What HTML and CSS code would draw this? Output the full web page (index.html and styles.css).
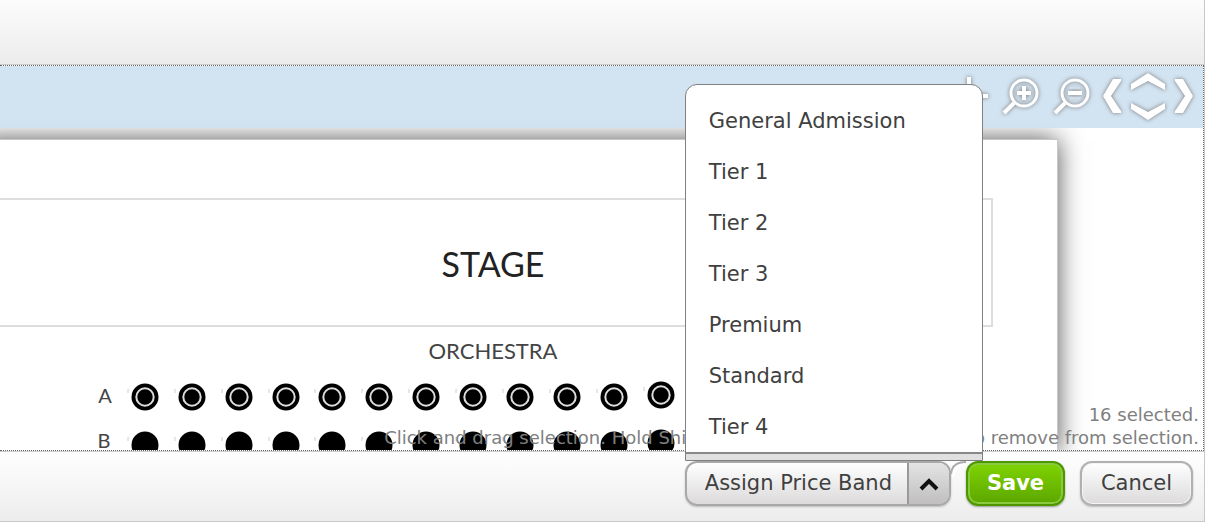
FILE: index.html
```html
<!DOCTYPE html>
<html lang="en">
<head>
<meta charset="utf-8">
<title>Assign Price Band</title>
<link rel="stylesheet" href="styles.css">
</head>
<body>
<main class="panel">
  <header class="panel-header"></header>
  <section class="canvas" aria-label="Seating map">
    <div class="sheet">
      <svg class="plan" width="1058" height="312" viewBox="0 0 1058 312">
        <defs>
          <g id="seat-on">
            <path d="M-17-8v4" stroke="#ccc"/>
            <circle r="13.5"/>
            <circle r="8.7" fill="none" stroke="#ddd" stroke-width="2"/>
          </g>
          <g id="seat">
            <path d="M-17-8v4" stroke="#ccc"/>
            <circle r="13.5"/>
          </g>
        </defs>
        <rect class="stage-box" x="-1" y="59" width="993" height="127"/>
        <text class="stage-label" x="493" y="137">STAGE</text>
        <text class="area-label" x="493" y="219">ORCHESTRA</text>
        <text class="row-label" x="105" y="263">A</text>
        <text class="row-label" x="104" y="308">B</text>
        <g>
          <use href="#seat-on" x="145" y="257"/><use href="#seat-on" x="192" y="257"/><use href="#seat-on" x="239" y="257"/><use href="#seat-on" x="286" y="257"/><use href="#seat-on" x="332" y="257"/><use href="#seat-on" x="379" y="257"/><use href="#seat-on" x="426" y="257"/><use href="#seat-on" x="473" y="257"/><use href="#seat-on" x="520" y="257"/><use href="#seat-on" x="567" y="257"/><use href="#seat-on" x="614" y="257"/><use href="#seat-on" x="661" y="255"/>
        </g>
        <g>
          <use href="#seat" x="145" y="305"/><use href="#seat" x="192" y="305"/><use href="#seat" x="239" y="305"/><use href="#seat" x="286" y="305"/><use href="#seat" x="332" y="305"/><use href="#seat" x="379" y="305"/><use href="#seat" x="426" y="305"/><use href="#seat" x="473" y="305"/><use href="#seat" x="520" y="305"/><use href="#seat" x="567" y="305"/><use href="#seat" x="614" y="305"/><use href="#seat" x="661" y="303"/>
        </g>
      </svg>
    </div>
    <div class="tools">
      <button class="tool" aria-label="Pan">
        <svg width="44" height="52" viewBox="0 0 44 52"><path d="M24 7v38M5 26h38"/></svg>
      </button>
      <button class="tool" aria-label="Zoom in">
        <svg width="44" height="52" viewBox="0 0 44 52"><circle cx="27" cy="23" r="13" stroke-width="3"/><path d="M17 33L7 43"/><path d="M27 16v14M20 23h14"/></svg>
      </button>
      <button class="tool" aria-label="Zoom out">
        <svg width="44" height="52" viewBox="0 0 44 52"><circle cx="26" cy="23" r="13" stroke-width="3"/><path d="M16 33L6 43"/><path d="M19 23h14"/><path d="M21 18h10M21 28h10" stroke-width="1" opacity=".5"/></svg>
      </button>
      <div class="arrows">
        <button class="tool" aria-label="Move left"><svg width="22" height="52" viewBox="0 0 22 52"><path class="chev" d="M20 9H12L2 26L12 43H20V41L10 26L20 11Z"/></svg></button>
        <div class="updown">
          <button class="tool" aria-label="Move up"><svg width="42" height="25" viewBox="0 0 42 25"><path class="chev" d="M4 14L21 3L38 14V20L21 11L4 20Z"/></svg></button>
          <button class="tool" aria-label="Move down"><svg width="42" height="27" viewBox="0 0 42 27"><path class="chev" d="M4 8L21 17L38 8V14L21 25L4 14Z"/></svg></button>
        </div>
        <button class="tool" aria-label="Move right"><svg width="22" height="52" viewBox="0 0 22 52"><path class="chev" d="M2 9H10L20 26L10 43H2V41L12 26L2 11Z"/></svg></button>
      </div>
    </div>
    <p class="hint">16 selected.<br>Click and drag selection. Hold Shift to add to selection, hold Ctrl to remove from selection.</p>
  </section>
  <footer class="panel-footer">
    <div class="split">
      <button class="split-main">Assign Price Band</button><button class="split-toggle" aria-label="Show price bands" aria-expanded="true"><svg width="20" height="14" viewBox="0 0 20 14"><path d="M2 12L10 4L18 12" fill="none" stroke="#111" stroke-width="4"/></svg></button>
      <div class="menu">
        <ul class="menu-list">
          <li><button class="menu-item">General Admission</button></li>
          <li><button class="menu-item">Tier 1</button></li>
          <li><button class="menu-item">Tier 2</button></li>
          <li><button class="menu-item">Tier 3</button></li>
          <li><button class="menu-item">Premium</button></li>
          <li><button class="menu-item">Standard</button></li>
          <li><button class="menu-item">Tier 4</button></li>
        </ul>
        <div class="menu-foot"></div>
      </div>
    </div>
    <svg class="notch" width="15" height="45" viewBox="0 0 15 45"><path d="M0 13Q1 1 15 1V4Q5 4 2 18Z" fill="#fff"/><path d="M0 13Q1 1 15 1" fill="none" stroke="#aaa" stroke-width="2"/></svg>
    <button class="btn save">Save</button>
    <button class="btn cancel">Cancel</button>
  </footer>
</main>
</body>
</html>
```
FILE: styles.css
```css
* { box-sizing: border-box; }

body {
  margin: 0;
  background: #fff;
  color: #404040;
  font: 21px/24px "DejaVu Sans", Verdana, sans-serif;
}

button {
  margin: 0;
  padding: 0;
  border: 0;
  background: none;
  color: inherit;
  font: inherit;
  cursor: pointer;
}

svg { display: block; }

.panel {
  margin-right: 7px;
  border: solid #c8c8c8;
  border-width: 0 1px 1px 0;
}

.panel-header {
  height: 65px;
  border-bottom: 1px solid #ccc;
  background: linear-gradient(#fcfcfc, #ececec);
}

.canvas {
  position: relative;
  height: 386px;
  overflow: hidden;
  border: 1px dotted #666;
  border-left: 0;
  background: #fff;
}

.sheet {
  position: absolute;
  top: 73px;
  left: -21px;
  right: 145px;
  padding-left: 20px;
  border: 1px solid #c8c8c8;
  background: #fff;
  box-shadow: 0 0 24px #555;
}

.stage-box {
  fill: none;
  stroke: #ddd;
  stroke-width: 2;
}

.stage-label,
.area-label,
.row-label {
  fill: #222;
  font-family: Lato, sans-serif;
  text-anchor: middle;
}

.stage-label { font-size: 34px; }
.area-label { font-size: 22px; }
.row-label { font-size: 20px; }

.area-label,
.row-label { fill: #444; }

.tools {
  position: relative;
  display: flex;
  justify-content: flex-end;
  gap: 8px;
  height: 62px;
  padding: 4px 8px 0 0;
  background: rgba(206, 225, 240, 0.92);
}

.tool {
  display: flex;
  align-items: flex-start;
}

.tool svg {
  fill: none;
  stroke: #fff;
  stroke-width: 4;
  filter: drop-shadow(0 0 2px #777);
}

.tool .chev {
  fill: #fff;
  stroke: none;
}

.arrows {
  display: flex;
  align-items: flex-start;
  gap: 4px;
}

.updown { display: flex; flex-direction: column; }

.hint {
  position: absolute;
  right: 4px;
  bottom: 1px;
  margin: 0;
  color: #808080;
  font-size: 18px;
  line-height: 23px;
  text-align: right;
  white-space: nowrap;
}

.panel-footer {
  display: flex;
  justify-content: flex-end;
  padding: 9px 11px 15px;
  border-top: 1px solid #ccc;
  background: linear-gradient(#fff, #ececec);
}

.split {
  position: relative;
  display: flex;
  height: 45px;
  border: 2px solid #a8a8a8;
  border-radius: 12px;
  background: linear-gradient(#fff, #dcdada);
  box-shadow: 0 1px 2px #bbb;
}

.split-main { padding: 0 15px 2px 18px; }

.split-toggle {
  display: grid;
  place-items: center;
  width: 42px;
  border-left: 2px solid #999;
  border-radius: 0 10px 10px 0;
  background: linear-gradient(#e4e4e4, #c0bebe);
}

.menu {
  position: absolute;
  left: -2px;
  bottom: 43px;
  width: 298px;
  border: 1px solid #808080;
  border-radius: 12px 12px 0 0;
  background: #fff;
}

.menu-list {
  margin: 0;
  padding: 10px 0 0;
  list-style: none;
}

.menu-item {
  display: block;
  width: 100%;
  height: 51px;
  padding: 0 23px;
  text-align: left;
}

.menu-foot {
  height: 8px;
  border-top: 2px solid #888;
  background: #e0e0e0;
}

.btn {
  height: 45px;
  padding-bottom: 2px;
  border-radius: 12px;
}

.save {
  width: 99px;
  margin-right: 15px;
  border: 2px solid #4d9600;
  background: linear-gradient(#80d400, #5ca600);
  box-shadow: inset 0 0 0 2px #8aca40, 0 1px 2px #999;
  color: #fff;
  font-weight: bold;
}

.cancel {
  width: 113px;
  border: 2px solid #b0b0b0;
  background: linear-gradient(#fff, #dcdada);
  box-shadow: inset 0 0 0 1px #f4f4f4, 0 1px 2px #bbb;
}
```
